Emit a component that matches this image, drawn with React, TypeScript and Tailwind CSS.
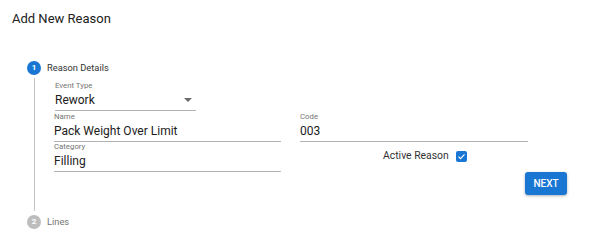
import React from 'react';

function Field({ label, value, width, select = false }: { label: string; value: string; width: string; select?: boolean }) {
  return (
    <div className={`${width} flex flex-col`}>
      <div className="h-[10px] text-[7.8px] leading-[10px] text-[#757575]">{label}</div>
      <div className="flex h-[20px] items-center justify-between border-b border-[#b3b3b3] pb-[1px] text-[12px] leading-[16px] text-[#212121]">
        <span>{value}</span>
        {select ? (
          <svg width="8" height="4" viewBox="0 0 8 4" className="mr-[4px]">
            <path d="M0 0 L8 0 L4 4 Z" fill="#6b6b6b" />
          </svg>
        ) : null}
      </div>
    </div>
  );
}

function App() {
  return (
    <div className="relative h-[251px] w-[600px] bg-white font-['Roboto',sans-serif]">
      <div className="pl-[12px] pt-[9px] text-[13px] leading-[20px] text-[#212121]">Add New Reason</div>

      <div className="mt-[32px]">
        {/* step 1 */}
        <div className="flex h-[14px] items-center pl-[27px]">
          <div className="flex h-[14px] w-[14px] items-center justify-center rounded-full bg-[#1976d2] text-[8px] font-bold text-white">
            1
          </div>
          <div className="ml-[6px] text-[9.3px] text-[#333]">Reason Details</div>
        </div>

        <div className="ml-[34px] mt-[3px] border-l border-[#c4c4c4] pb-[16px] pl-[19px] pt-[3px]">
          <div className="pl-[1px]">
            <Field label="Event Type" value="Rework" width="w-[141px]" select />
          </div>

          <div className="mt-[1px] flex gap-[19px]">
            <Field label="Name" value="Pack Weight Over Limit" width="w-[227px]" />
            <Field label="Code" value="003" width="w-[228px]" />
          </div>

          <div className="flex gap-[19px]">
            <Field label="Category" value="Filling" width="w-[227px]" />
            <div className="flex w-[228px] items-center pl-[83px] pb-[2px]">
              <span className="text-[10.4px] text-[#333]">Active Reason</span>
              <div className="ml-[7px] flex h-[11px] w-[11px] items-center justify-center rounded-[2px] bg-[#1976d2]">
                <svg width="9" height="9" viewBox="0 0 24 24">
                  <path d="M4 12.5 L9.5 18 L20 6.5" fill="none" stroke="white" strokeWidth="3" />
                </svg>
              </div>
            </div>
          </div>

          <div className="flex w-[513px] justify-end">
            <button className="h-[23px] w-[42px] rounded-[3px] bg-[#1976d2] text-[10px] font-medium text-white shadow-[0_1px_3px_rgba(0,0,0,0.3)]">
              NEXT
            </button>
          </div>
        </div>

        {/* step 2 */}
        <div className="mt-[4px] flex h-[14px] items-center pl-[27px]">
          <div className="flex h-[14px] w-[14px] items-center justify-center rounded-full bg-[#bdbdbd] text-[8px] font-bold text-white">
            2
          </div>
          <div className="ml-[6px] text-[9.3px] text-[#757575]">Lines</div>
        </div>
      </div>
    </div>
  );
}

export default App;
